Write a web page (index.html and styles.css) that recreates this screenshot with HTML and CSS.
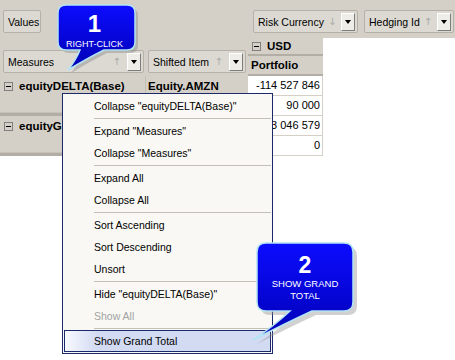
FILE: index.html
```html
<!DOCTYPE html>
<html lang="en">
<head>
    <meta charset="UTF-8">
    <title>Pivot context menu</title>
    <link rel="stylesheet" href="styles.css">
</head>
<body>
<div class="screen">
    <div class="filter-bar">
        <div class="field-btn values">Values</div>
        <div class="col-fields">
            <div class="field-btn risk"><span class="label">Risk Currency</span><span class="sort">↓</span><span class="drop"></span></div>
            <div class="field-btn hedging"><span class="label">Hedging Id</span><span class="sort">↑</span><span class="drop"></span></div>
        </div>
    </div>

    <div class="pivot">
        <div class="row-area">
            <div class="row-fields">
                <div class="field-btn measures"><span class="label">Measures</span><span class="sort">↑</span><span class="drop"></span></div>
                <div class="field-btn shifted"><span class="label">Shifted Item</span><span class="sort">↑</span><span class="drop"></span></div>
            </div>
            <div class="row-group">
                <div class="row-head"><span class="toggle"></span>equityDELTA(Base)</div>
                <div class="row-sub">Equity.AMZN</div>
            </div>
            <div class="row-group">
                <div class="row-head"><span class="toggle"></span><span class="clip">equityGAMMA(Base)</span></div>
                <div class="row-sub"></div>
            </div>
        </div>
        <div class="data-col">
            <div class="col-head usd"><span class="toggle"></span>USD</div>
            <div class="col-head portfolio">Portfolio</div>
            <div class="cell">-114 527 846</div>
            <div class="cell">90 000</div>
            <div class="cell">3 046 579</div>
            <div class="cell">0</div>
        </div>
    </div>

    <div class="menu">
        <div class="menu-item">Collapse "equityDELTA(Base)"</div>
        <div class="menu-sep"></div>
        <div class="menu-item">Expand "Measures"</div>
        <div class="menu-item">Collapse "Measures"</div>
        <div class="menu-sep"></div>
        <div class="menu-item">Expand All</div>
        <div class="menu-item">Collapse All</div>
        <div class="menu-sep"></div>
        <div class="menu-item">Sort Ascending</div>
        <div class="menu-item">Sort Descending</div>
        <div class="menu-item">Unsort</div>
        <div class="menu-sep"></div>
        <div class="menu-item">Hide "equityDELTA(Base)"</div>
        <div class="menu-item disabled">Show All</div>
        <div class="menu-sep"></div>
        <div class="menu-item active">Show Grand Total</div>
    </div>

    <!-- step callouts -->
    <svg class="bubble-shape bubble-one-shape" width="90" height="74" viewBox="0 0 90 74">
        <defs>
            <linearGradient id="blueFill" x1="0" y1="0" x2="0" y2="1">
                <stop offset="0" stop-color="#0c0cff"/>
                <stop offset="1" stop-color="#0000b4"/>
            </linearGradient>
        </defs>
        <path transform="translate(3 3)" fill="#8c8c8c" opacity="0.45" d="M14,3 H75 Q83,3 83,11 V40 Q83,48 75,48 H52 Q36,56 16,68 Q24,58 28,48 H14 Q6,48 6,40 V11 Q6,3 14,3 Z"/>
        <path fill="url(#blueFill)" stroke="#b3e4f4" stroke-width="1.5" d="M14,3 H75 Q83,3 83,11 V40 Q83,48 75,48 H52 Q36,56 16,68 Q24,58 28,48 H14 Q6,48 6,40 V11 Q6,3 14,3 Z"/>
    </svg>
    <div class="bubble bubble-one">
        <div class="step">1</div>
        <div class="caption">RIGHT-CLICK</div>
    </div>

    <svg class="bubble-shape bubble-two-shape" width="114" height="108" viewBox="0 0 114 108">
        <defs>
            <linearGradient id="blueFill2" x1="0" y1="0" x2="0" y2="1">
                <stop offset="0" stop-color="#0c0cff"/>
                <stop offset="1" stop-color="#0000b4"/>
            </linearGradient>
        </defs>
        <path transform="translate(4 4)" fill="#8c8c8c" opacity="0.4" d="M18,5 H96 Q105,5 105,14 V64 Q105,73 96,73 H64 Q36,86 5,102 Q26,88 42,73 H18 Q9,73 9,64 V14 Q9,5 18,5 Z"/>
        <path fill="url(#blueFill2)" stroke="#b3e4f4" stroke-width="1.5" d="M18,5 H96 Q105,5 105,14 V64 Q105,73 96,73 H64 Q36,86 5,102 Q26,88 42,73 H18 Q9,73 9,64 V14 Q9,5 18,5 Z"/>
    </svg>
    <div class="bubble bubble-two">
        <div class="step">2</div>
        <div class="caption">SHOW GRAND<br>TOTAL</div>
    </div>
</div>
</body>
</html>
```

FILE: styles.css
```css
* {
    box-sizing: border-box;
}
body {
    margin: 0;
    font-family: "Liberation Sans", Arial, sans-serif;
    font-size: 10.5px;
    color: #000;
    background: #fff;
}
.screen {
    position: relative;
    width: 455px;
    height: 360px;
    overflow: hidden;
}

/* field buttons */
.field-btn {
    display: flex;
    align-items: center;
    height: 23px;
    padding: 0 2px 0 4px;
    border: 1px solid #b5b1a9;
    border-radius: 2px;
    background: #dcd9d2;
    white-space: nowrap;
}
.field-btn .label {
    flex: 1;
}
.field-btn .sort {
    color: #a9a9a9;
    font-family: "DejaVu Sans", sans-serif;
    font-size: 10px;
    margin: 0 6px 0 4px;
}
.drop {
    position: relative;
    width: 14px;
    height: 18px;
    border: 1px solid;
    border-color: #fff #7d7d7d #7d7d7d #fff;
    background: #efede8;
}
.drop::after {
    content: "";
    position: absolute;
    left: 3px;
    top: 6px;
    border-left: 3.5px solid transparent;
    border-right: 3.5px solid transparent;
    border-top: 4px solid #000;
}

.filter-bar {
    display: flex;
    align-items: flex-start;
    height: 38px;
    padding: 10px 0 0 3px;
    background: #d4d0c8;
}
.values {
    width: 38px;
}
.col-fields {
    display: flex;
    gap: 6px;
    margin-left: 212px;
}
.risk {
    width: 105px;
}
.hedging {
    width: 90px;
}
.risk .label,
.hedging .label {
    flex: none;
}
.risk .sort,
.hedging .sort {
    margin-right: auto;
}

/* pivot grid */
.pivot {
    display: flex;
}
.row-area {
    width: 248px;
    background: #d4d0c8;
}
.row-fields {
    display: flex;
    gap: 4px;
    height: 38px;
    padding: 12px 0 0 3px;
}
.measures {
    width: 141px;
}
.shifted {
    width: 98px;
}
.row-group {
    display: grid;
    grid-template-columns: 145px 103px;
    height: 40px;
    border-bottom: 3px solid #b2aea6;
    box-shadow: inset 0 -1px 0 #c6c2ba;
}
.row-head,
.row-sub {
    font-size: 11.5px;
    font-weight: bold;
    line-height: 20px;
    white-space: nowrap;
}
.row-head {
    display: flex;
    align-items: center;
    height: 20px;
    padding-left: 4px;
}
.row-head .clip {
    width: 43px;
    overflow: hidden;
}
.row-sub {
    height: 20px;
    padding-left: 2px;
    border-left: 1px solid #c3bfb7;
}
.toggle {
    position: relative;
    flex: none;
    width: 9px;
    height: 9px;
    margin-right: 6px;
    border: 1px solid #808080;
}
.toggle::after {
    content: "";
    position: absolute;
    left: 1px;
    top: 3px;
    width: 5px;
    height: 1px;
    background: #000;
}

.data-col {
    width: 75px;
}
.col-head {
    display: flex;
    align-items: center;
    background: #d4d0c8;
    font-size: 11.5px;
    font-weight: bold;
    border-bottom: 2px solid #b2aea6;
}
.usd {
    height: 18px;
    padding-left: 4px;
}
.portfolio {
    height: 20px;
    padding-left: 3px;
}
.cell {
    height: 20px;
    line-height: 19px;
    padding-right: 2px;
    text-align: right;
    border-right: 1px solid #d4d0c8;
    border-bottom: 1px solid #d4d0c8;
    font-size: 11px;
}

/* context menu */
.menu {
    position: absolute;
    left: 62px;
    top: 93px;
    width: 211px;
    padding: 1px;
    border: 1px solid #1c2a6c;
    background: #f9f8f4;
}
.menu-item {
    height: 22px;
    line-height: 22px;
    padding-left: 30px;
    white-space: nowrap;
}
.menu-item.disabled {
    color: #a3a3a3;
}
.menu-item.active {
    line-height: 20px;
    padding-left: 29px;
    border: 1px solid #1c2a6c;
    background: linear-gradient(to right, #f7f9fe, #d3dbf3 32px);
}
.menu-sep {
    height: 1px;
    margin: 1px 0 1px 30px;
    background: #c3c0b7;
}

/* callouts */
.bubble-shape {
    position: absolute;
    z-index: 2;
}
.bubble-one-shape {
    left: 52px;
    top: 2px;
}
.bubble-two-shape {
    left: 248px;
    top: 238px;
}
.bubble {
    position: absolute;
    z-index: 3;
    color: #fff;
    text-align: center;
}
.bubble .step {
    font-size: 24px;
    font-weight: bold;
    line-height: 24px;
}
.bubble .caption {
    font-size: 9px;
    line-height: 10px;
    margin-top: 3px;
}
.bubble-one {
    left: 57px;
    top: 12px;
    width: 75px;
}
.bubble-two {
    left: 257px;
    top: 254px;
    width: 96px;
}
.bubble-two .step {
    font-size: 23px;
    line-height: 23px;
}
.bubble-two .caption {
    font-size: 9.5px;
    line-height: 12px;
    margin-top: 1px;
}
```
